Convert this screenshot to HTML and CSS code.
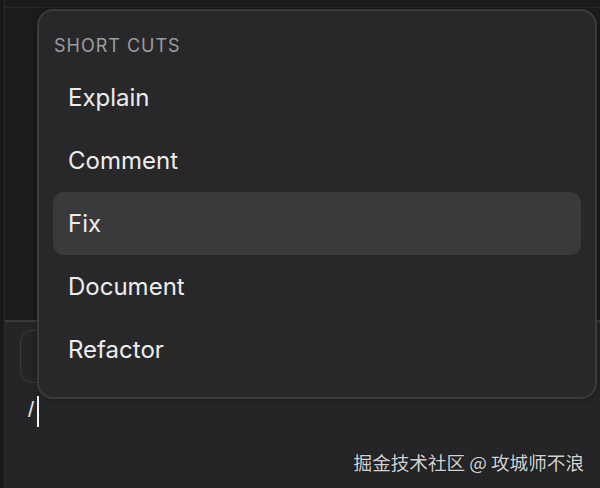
FILE: index.html
```html
<!DOCTYPE html>
<html lang="en">
<head>
<meta charset="utf-8">
<link rel="stylesheet" href="styles.css">
</head>
<body>
<div class="app">
  <div class="rail"></div>
  <div class="main">
    <div class="editor">
      <div class="topbar"></div>
    </div>
    <div class="composer">
      <div class="chip"></div>
      <div class="input"><span class="slash">/</span><span class="caret"></span></div>
    </div>
  </div>

  <div class="menu">
    <div class="menu-title">SHORT CUTS</div>
    <div class="item">Explain</div>
    <div class="item">Comment</div>
    <div class="item active">Fix</div>
    <div class="item">Document</div>
    <div class="item">Refactor</div>
  </div>

  <div class="watermark">掘金技术社区 @ 攻城师不浪</div>
</div>
</body>
</html>
```

FILE: styles.css
```css
* { box-sizing: border-box; }
html, body {
  margin: 0;
  padding: 0;
  width: 600px;
  height: 488px;
  overflow: hidden;
  background: #252527;
  font-family: "Inter", "Lato", sans-serif;
}
.app {
  position: relative;
  width: 600px;
  height: 488px;
  display: flex;
}
.rail {
  width: 4px;
  flex: none;
  background: #19191b;
}
.main {
  flex: 1;
  display: flex;
  flex-direction: column;
  border-left: 1px solid #2a2a2c;
}
.editor {
  height: 322px;
  background: #1c1c1e;
  border-bottom: 2px solid #3a3a3c;
  flex: none;
}
.topbar {
  height: 8px;
  border-bottom: 1px solid #2a2a2c;
  background: #1b1b1d;
}
.composer {
  flex: 1;
  background: #252527;
  padding: 8px 0 0 15px;
  display: flex;
  flex-direction: column;
}
.chip {
  width: 300px;
  height: 53px;
  border: 1.5px solid #3a3a3c;
  border-radius: 12px;
}
.input {
  display: flex;
  align-items: flex-start;
  padding: 16px 0 0 8px;
  color: #e6e6e6;
  font-size: 22px;
  line-height: 22px;
}
.slash { font-family: "Liberation Sans", sans-serif; }
.caret {
  width: 2px;
  height: 31px;
  margin-left: 3px;
  margin-top: -3px;
  background: #f0f0f0;
}
.menu {
  position: absolute;
  left: 37px;
  top: 9px;
  width: 560px;
  height: 390px;
  background: #28282a;
  border: 2px solid #3b3b3e;
  border-radius: 16px;
  padding: 23px 14px 0 14px;
  box-shadow: 0 0 6px rgba(0,0,0,0.35);
}
.menu-title {
  color: #9c9c9f;
  font-size: 18px;
  font-weight: 400;
  letter-spacing: 1px;
  line-height: 24px;
  padding-left: 1px;
  margin-bottom: 8px;
}
.item {
  height: 63px;
  display: flex;
  align-items: center;
  padding-left: 15px;
  color: #ededed;
  font-size: 24px;
  font-weight: 400;
  border-radius: 11px;
}
.item.active {
  background: #3a3a3c;
}
.watermark {
  position: absolute;
  right: 16px;
  top: 450px;
  color: #d2d2d2;
  font-family: "Noto Sans CJK SC", sans-serif;
  font-size: 18.6px;
  line-height: 24px;
  text-shadow: 0 0 2px rgba(0,0,0,0.5);
}
```
